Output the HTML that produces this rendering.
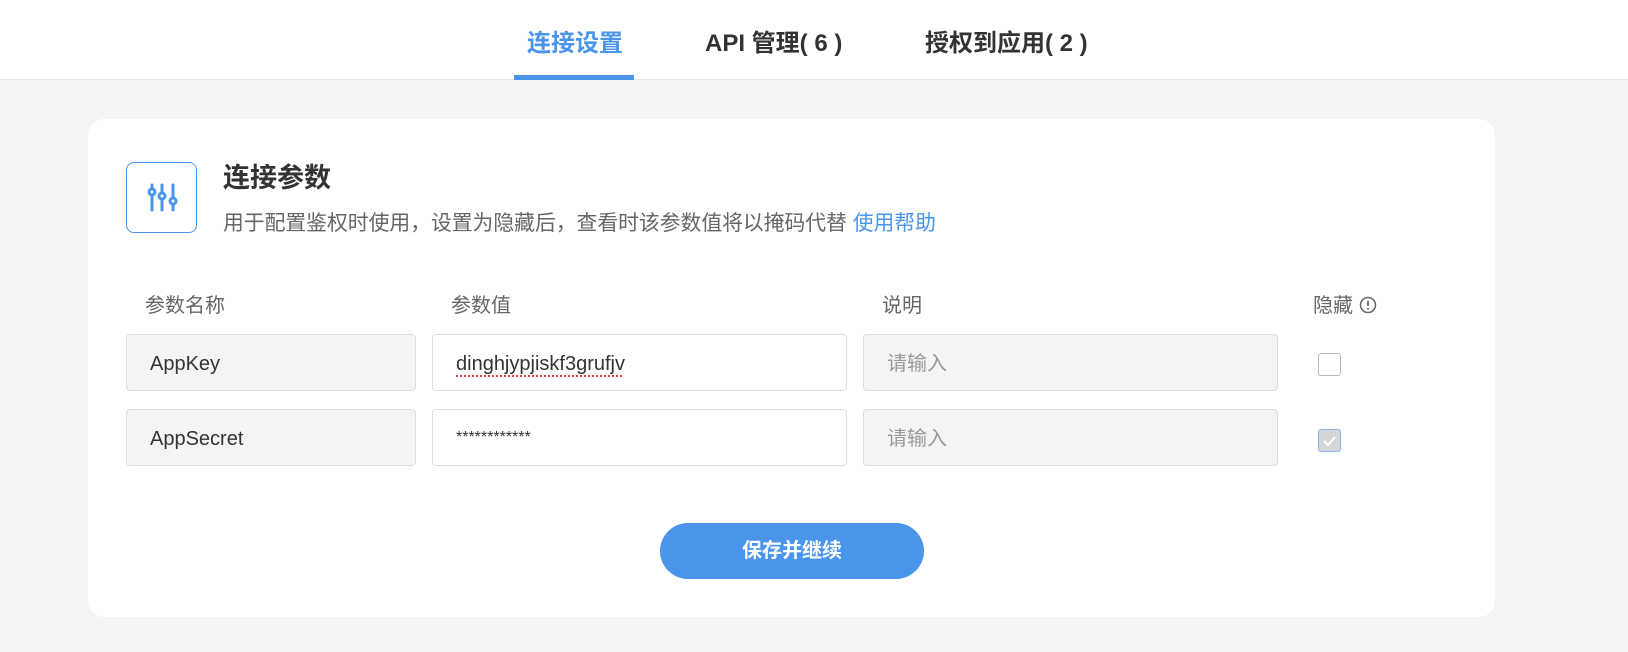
<!DOCTYPE html>
<html><head><meta charset="utf-8"><style>
*{box-sizing:border-box;margin:0;padding:0}
body{width:1628px;height:652px;background:#f4f4f4;font-family:"Liberation Sans","Noto Sans CJK SC",sans-serif;position:relative;overflow:hidden;color:#333}
.hdr{position:absolute;left:0;top:0;width:1628px;height:80px;background:#fff;border-bottom:1px solid #e6e6e6}
.tab{position:absolute;top:27px;font-size:24px;font-weight:bold;color:#333;line-height:34px;white-space:nowrap}
.ul{position:absolute;left:514px;top:75px;width:120px;height:5px;background:#4a95eb}
.card{position:absolute;left:88px;top:119px;width:1407px;height:498px;background:#fff;border-radius:16px}
.ico{position:absolute;left:126px;top:162px;width:71px;height:71px;border:1px solid #4a95eb;border-radius:8px}
.t{position:absolute;left:223px;top:160px;font-size:27px;font-weight:bold;line-height:36px;color:#333}
.s{position:absolute;left:223px;top:210px;font-size:20.8px;line-height:28px;color:#666;white-space:nowrap}
.s a{color:#4a95eb;text-decoration:none}
.ch{position:absolute;top:292px;font-size:20px;color:#666;line-height:28px}
.in{position:absolute;height:57px;border:1px solid #ddd;border-radius:4px;background:#f4f4f4;font-size:20px;line-height:59px;padding-left:23px;color:#333}
.w{background:#fff}
.ph{color:#999}
.cb{position:absolute;left:1318px;width:23px;height:23px;border:1px solid #bbb;border-radius:3px;background:#fff}
.cb2{background:#d6d6d6;border-color:#8ab4ee}
.btn{position:absolute;left:660px;top:523px;width:264px;height:56px;border-radius:28px;background:#4a95eb;color:#fff;font-size:20px;font-weight:bold;text-align:center;line-height:56px}
</style></head><body>
<div class="hdr">
<div class="tab" style="left:527px;color:#4a95eb">连接设置</div>
<div class="tab" style="left:705px">API 管理( 6 )</div>
<div class="tab" style="left:925px">授权到应用( 2 )</div>
<div class="ul"></div>
</div>
<div class="card"></div>
<div class="ico"><svg width="71" height="71" viewBox="0 0 71 71"><g stroke="#4a95eb" stroke-width="3" fill="#fff" stroke-linecap="round"><line x1="25" y1="22" x2="25" y2="47"/><line x1="35" y1="22" x2="35" y2="47"/><line x1="46" y1="22" x2="46" y2="47"/><circle cx="25" cy="29" r="3"/><circle cx="35" cy="33" r="3"/><circle cx="46" cy="38" r="3"/></g></svg></div>
<div class="t">连接参数</div>
<div class="s">用于配置鉴权时使用，设置为隐藏后，查看时该参数值将以掩码代替 <a>使用帮助</a></div>
<div class="ch" style="left:145px">参数名称</div>
<div class="ch" style="left:451px">参数值</div>
<div class="ch" style="left:882px">说明</div>
<div class="ch" style="left:1313px">隐藏 <svg width="18" height="18" viewBox="0 0 18 18" style="vertical-align:-2px"><circle cx="9" cy="9" r="7.5" fill="none" stroke="#666" stroke-width="1.5"/><line x1="9" y1="5" x2="9" y2="10" stroke="#666" stroke-width="1.8"/><circle cx="9" cy="12.8" r="1" fill="#666"/></svg></div>
<div class="in" style="left:126px;top:334px;width:290px">AppKey</div>
<div class="in w" style="left:432px;top:334px;width:415px"><span style="text-decoration:underline dotted #e04040;text-underline-offset:5px">dinghjypjiskf3grufjv</span></div>
<div class="in ph" style="left:863px;top:334px;width:415px">请输入</div>
<div class="cb" style="top:353px"></div>
<div class="in" style="left:126px;top:409px;width:290px">AppSecret</div>
<div class="in w" style="left:432px;top:409px;width:415px;font-size:16px;line-height:56px">************</div>
<div class="in ph" style="left:863px;top:409px;width:415px">请输入</div>
<div class="cb cb2" style="top:429px"><svg width="21" height="21" viewBox="0 0 21 21"><path d="M5 11l4 4 7-8" fill="none" stroke="#fff" stroke-width="2"/></svg></div>
<div class="btn">保存并继续</div>
</body></html>
